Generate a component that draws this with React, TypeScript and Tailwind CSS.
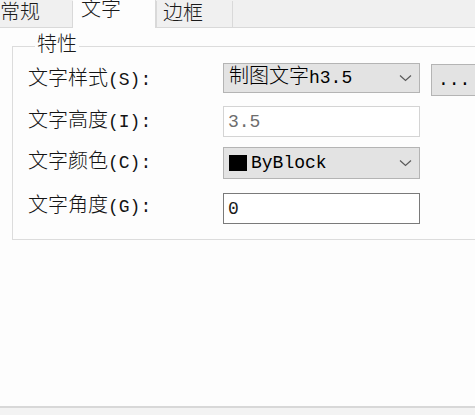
import React from "react";

function Chevron() {
  return (
    <svg width="13" height="8" viewBox="0 0 13 8" className="shrink-0">
      <path d="M1 1.5 L6.5 6.5 L12 1.5" fill="none" stroke="#5a5a5a" strokeWidth="1.2" />
    </svg>
  );
}

function Label({ cjk, latin, extra }: { cjk: string; latin: string; extra?: string }) {
  return (
    <div className={"w-[195px] shrink-0 h-full flex items-center text-[#141414] " + (extra ?? "")}>
      <span className="text-[20px] leading-none">{cjk}</span>
      <span className="text-[18px] leading-none">{latin}</span>
    </div>
  );
}

export default function App() {
  return (
    <div className="w-[475px] h-[415px] overflow-hidden flex flex-col bg-[#fdfdfd] font-['Liberation_Mono','Noto_Sans_CJK_SC',monospace] font-light text-black">
      {/* tab bar */}
      <div className="h-[28px] shrink-0 flex items-end bg-[#f0f0f0] border-b border-[#d9d9d9]">
        <div className="ml-[-7px] w-[80px] h-[26px] border-r border-[#d9d9d9] pl-[7px] text-[20px] leading-[25px] text-[#1a1a1a]">
          常规
        </div>
        <div className="w-[83px] h-[28px] -mb-px bg-[#fdfdfd] border-r border-[#d9d9d9] pl-[8px] text-[20px] leading-[21px] text-[#1a1a1a]">
          文字
        </div>
        <div className="w-[77px] h-[26px] border-x border-[#d9d9d9] pl-[6px] text-[20px] leading-[27px] text-[#1a1a1a]">
          边框
        </div>
      </div>

      {/* content */}
      <div className="flex-1 pl-[12px] pt-[8px]">
        <fieldset className="w-[475px] border border-[#dcdcdc] px-0 pl-[15px] pb-[15px]">
          <legend className="ml-[7px] px-[2px] text-[20px] leading-[20px] text-[#1a1a1a]">特性</legend>
          <div className="pt-[7px] flex flex-col">
            {/* row 1 */}
            <div className="h-[33px] flex items-start">
              <Label cjk="文字样式" latin="(S):" extra="pt-[1px]" />
              <div className="w-[197px] h-[30px] bg-[#e3e3e3] border border-[#b4b4b4] flex items-center justify-between pl-[5px] pr-[7px]">
                <span className="flex items-center">
                  <span className="text-[20px] leading-none">制图文字</span>
                  <span className="text-[18px] leading-none">h3.5</span>
                </span>
                <Chevron />
              </div>
              <div className="ml-[11px] mt-[1px] w-[50px] h-[32px] bg-[#e3e3e3] border border-[#b4b4b4] pl-[6px] flex items-center text-[18px] leading-none">
                ...
              </div>
            </div>
            {/* row 2 */}
            <div className="mt-[10px] h-[31px] flex items-center">
              <Label cjk="文字高度" latin="(I):" />
              <div className="w-[197px] h-[31px] bg-white border border-[#d4d4d4] pl-[4px] flex items-center text-[18px] leading-none text-[#6d6d6d]">
                3.5
              </div>
            </div>
            {/* row 3 */}
            <div className="mt-[10px] h-[32px] flex items-center">
              <Label cjk="文字颜色" latin="(C):" />
              <div className="w-[197px] h-[32px] bg-[#e3e3e3] border border-[#b4b4b4] flex items-center justify-between pl-[5px] pr-[7px]">
                <span className="flex items-center">
                  <span className="w-[18px] h-[16px] bg-black mr-[4px]" />
                  <span className="text-[18px] leading-none">ByBlock</span>
                </span>
                <Chevron />
              </div>
            </div>
            {/* row 4 */}
            <div className="mt-[14px] h-[31px] flex items-center">
              <Label cjk="文字角度" latin="(G):" extra="pb-[4px]" />
              <div className="w-[197px] h-[31px] bg-white border border-[#7a7a7a] pl-[4px] flex items-center text-[18px] leading-none text-[#1a1a1a]">
                0
              </div>
            </div>
          </div>
        </fieldset>
      </div>

      {/* bottom edge */}
      <div className="h-[9px] shrink-0 border-t-2 border-[#d8d8d8] bg-[#f3f3f3]" />
    </div>
  );
}
